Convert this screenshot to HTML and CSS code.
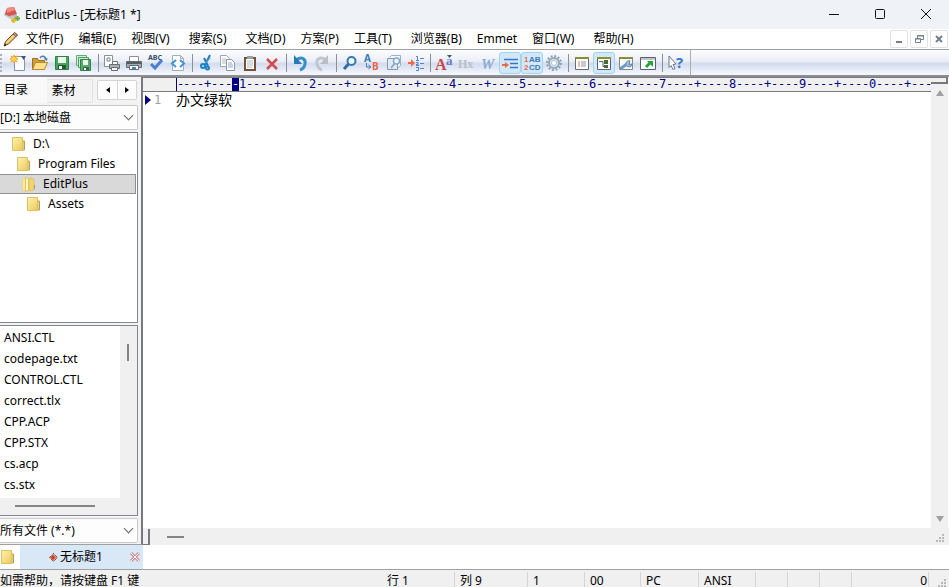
FILE: index.html
```html
<!DOCTYPE html>
<html lang="zh-CN">
<head>
    <meta charset="UTF-8">
    <meta name="viewport" content="width=device-width, initial-scale=1.0">
    <title>EditPlus - [无标题1 *]</title>
    <link rel="stylesheet" href="styles.css">
</head>
<body>
    <svg class="defs" aria-hidden="true">
        <defs>
            <linearGradient id="gold" x1="0" y1="0" x2="1" y2="1">
                <stop offset="0" stop-color="#fff3b0"/><stop offset="1" stop-color="#ebc95c"/>
            </linearGradient>
            <symbol id="folder" viewBox="0 0 16 16">
                <path d="M11 5h2.500v9H11z" fill="#e8cf74" stroke="#c2a13c"/>
                <path d="M1.500 1.500h10v13l-10 0z" fill="url(#gold)" stroke="#dfc164"/>
                <path d="M13.500 9v4" stroke="#8aa2a0"/>
            </symbol>
            <symbol id="folder-open" viewBox="0 0 16 16">
                <path d="M8 2l5 1v11l-5 1z" fill="#f0d372" stroke="#e2c360"/>
                <path d="M1.500 2.500h3v12h-3z" fill="#f8e9a0" stroke="#efd883"/>
                <path d="M4.500 1.500l3 1v12l-3 1z" fill="#fff6c0" stroke="#e3c460"/>
                <path d="M13.500 9v4" stroke="#8aa2a0"/>
            </symbol>
        </defs>
    </svg>

    <!-- Title bar -->
    <header class="titlebar">
        <svg class="app-icon" viewBox="0 0 16 16">
            <path d="M0 8l3-6 10 6-2 6z" fill="#b9b3b3"/>
            <path d="M3 1l7-1 3 7-8 2-4-2z" fill="#d9534f"/>
            <path d="M3 1l7-1 1 3-8 3z" fill="#ee8b80"/>
            <path d="M0 8l6 2 4-1v4l-4-1z" fill="#cfcaca"/>
            <path d="M13.500 9v5M11 11.500h5" stroke="#6cab3c" stroke-width="2"/>
            <path d="M9.500 11v5M7 13.500h5" stroke="#e5b62c" stroke-width="2"/>
        </svg>
        <h1>EditPlus - [无标题1 *]</h1>
        <div class="window-buttons">
            <button aria-label="最小化"><svg viewBox="0 0 12 12"><path d="M1 6.500h10"/></svg></button>
            <button aria-label="最大化"><svg viewBox="0 0 12 12"><rect x="1.500" y="1.500" width="9" height="9" rx="1"/></svg></button>
            <button aria-label="关闭"><svg viewBox="0 0 12 12"><path d="M1 1l10 10M11 1L1 11"/></svg></button>
        </div>
    </header>

    <!-- Menu bar -->
    <nav class="menubar">
        <svg class="doc-icon" viewBox="0 0 16 16">
            <path d="M1 15l1.500-4.500L11.500 1.500l3 2.500L5.500 13z" fill="#f0bc62" stroke="#6d4c2c"/>
            <path d="M4 11.500l8-8" stroke="#fff0bd"/>
            <path d="M11.500 1.500l3 2.500-1.500 1.500-3-2.500z" fill="#d98e88" stroke="#7b5955"/>
            <path d="M1 15l1-2.500 1.500 1.500z" fill="#222"/>
        </svg>
        <button>文件(F)</button>
        <button>编辑(E)</button>
        <button class="wide">视图(V)</button>
        <button class="wide">搜索(S)</button>
        <button>文档(D)</button>
        <button>方案(P)</button>
        <button class="wide">工具(T)</button>
        <button>浏览器(B)</button>
        <button>Emmet</button>
        <button class="wide">窗口(W)</button>
        <button>帮助(H)</button>
        <div class="mdi-buttons">
            <button aria-label="最小化文档"><svg viewBox="0 0 10 10"><path d="M2 8h6" stroke-width="2"/></svg></button>
            <button aria-label="还原文档"><svg viewBox="0 0 10 10"><path d="M3.500 4V1.500h6v4H7M3 2h7M1.500 4.500h5v4h-5zM1 5h6"/></svg></button>
            <button aria-label="关闭文档"><svg viewBox="0 0 10 10"><path d="M2 2l6 6M8 2L2 8" stroke-width="2"/></svg></button>
        </div>
    </nav>

    <!-- Toolbar -->
    <div class="toolbar">
        <span class="handle"></span>
        <button aria-label="新建"><svg viewBox="0 0 16 16"><path d="M4.500 1.500h10v14h-10z" fill="#fafbfd" stroke="#8794a4"/><path d="M11 1h5l-2.500 4z" fill="#41586d"/><path d="M4 0v8M0 4h8M1 1l6 6M7 1L1 7" stroke="#f4a21f" stroke-width="1.500"/><circle cx="4" cy="4" r="2" fill="#ffd457"/></svg></button>
        <button aria-label="打开"><svg viewBox="0 0 16 16"><path d="M.5 14.500v-11h5l1 2h6v9z" fill="#d49a35" stroke="#9a7028"/><path d="M.5 14.500l3-7h12l-3 7z" fill="#ffe08a" stroke="#b88a32"/><path d="M8 3c2-3 5-2 6 1" fill="none" stroke="#4e7fae" stroke-width="1.500"/><path d="M11.500 3.500H16L14.500 6z" fill="#4e7fae"/></svg></button>
        <button aria-label="保存"><svg viewBox="0 0 16 16"><path d="M1.500 1.500h13v13h-13z" fill="#43a65b" stroke="#2d8142"/><path d="M4 2h8v6H4z" fill="#edf6ee"/><path d="M4 10h8v4H4z" fill="#2b5740"/><path d="M5 11h3v3H5z" fill="#fff"/></svg></button>
        <button aria-label="全部保存"><svg viewBox="0 0 16 16"><path d="M.5 .5h10v10H.5z" fill="#d5ebd9" stroke="#62ad70"/><path d="M2.500 2.500h10v10h-10z" fill="#d5ebd9" stroke="#4b9f5c"/><path d="M4.500 4.500h10v11h-10z" fill="#56ad6b" stroke="#2d8142"/><path d="M7 5h5v5H7z" fill="#edf6ee"/><path d="M7 12h6v3H7z" fill="#35684a"/><path d="M8 13h2v2H8z" fill="#fff"/></svg></button>
        <span class="sep"></span>
        <button aria-label="打印预览"><svg viewBox="0 0 16 16"><path d="M.5 .5h8v11h-8z" fill="#fff" stroke="#8a9097"/><path d="M3 3h3v3H3z" fill="none" stroke="#7d8690"/><path d="M8.500 6.500h5v3h-5z" fill="#fff" stroke="#6e757c"/><path d="M5.500 9.500h10v4h-10z" fill="#aab0b6" stroke="#666d75"/><path d="M7.500 12.500h6v3h-6z" fill="#fff" stroke="#666d75"/></svg></button>
        <button aria-label="打印"><svg viewBox="0 0 16 16"><path d="M3.500 1.500h9v5h-9z" fill="#fff" stroke="#8a9097"/><path d="M.5 6.500h15v6H.5z" fill="#a3abb3" stroke="#626a72"/><path d="M1 8h14" stroke="#555c64" stroke-width="2"/><path d="M3.500 10.500h9v4h-9z" fill="#fff" stroke="#666d75"/><path d="M6 13h4" stroke="#4388ca" stroke-width="2"/></svg></button>
        <button aria-label="拼写检查"><svg viewBox="0 0 16 16"><text x="0" y="5" class="abc">ABC</text><path d="M3 9l4 4 7-8" fill="none" stroke="#4a80cc" stroke-width="3"/></svg></button>
        <button aria-label="查看源代码"><svg viewBox="0 0 16 16"><path d="M2.500 .5h8l3 3v12h-11z" fill="#fff" stroke="#a5adb5"/><path d="M10.500 .5v3h3" fill="none" stroke="#a5adb5"/><path d="M6 5L2 8.500 6 12M10 5l4 3.500-4 3.500" fill="none" stroke="#3f94d5" stroke-width="2"/></svg></button>
        <span class="sep"></span>
        <button aria-label="剪切"><svg viewBox="0 0 16 16"><path d="M12 0L7 10M6 3l4 8" stroke="#2579b8" stroke-width="2"/><path d="M13 3L6 9" stroke="#78b7df"/><circle cx="5" cy="11" r="2" fill="none" stroke="#1784c8" stroke-width="2"/><circle cx="9.500" cy="13" r="1.500" fill="none" stroke="#1784c8" stroke-width="2"/></svg></button>
        <button aria-label="复制"><svg viewBox="0 0 16 16"><path d="M.5 .5h6l3 3v8h-9z" fill="#fff" stroke="#9ba6b2"/><path d="M2 4h4M2 6h5M2 8h5" stroke="#b0bac7"/><path d="M6.500 4.500h5l3 3v8h-8z" fill="#fff" stroke="#8997aa"/><path d="M8 8h4M8 10h5M8 12h5" stroke="#91a8cc"/></svg></button>
        <button aria-label="粘贴"><svg viewBox="0 0 16 16"><path d="M2 2h12v14H2z" fill="#765136"/><path d="M4 4h8v10H4z" fill="#fff"/><path d="M5 1h6v3H5z" fill="#999fa5"/><path d="M5 6h6M5 8h6M5 10h6M5 12h5" stroke="#b4bac0"/></svg></button>
        <button aria-label="删除"><svg viewBox="0 0 16 16"><path d="M3 4l10 10M13 4L3 14" stroke="#d14b50" stroke-width="2.500"/></svg></button>
        <span class="sep"></span>
        <button aria-label="撤销"><svg viewBox="0 0 16 16"><path d="M4 5c6-4 10-1 9 4-.5 3-2 5-5 6" fill="none" stroke="#378fc7" stroke-width="3"/><path d="M2 0v9h8z" fill="#2879b6"/></svg></button>
        <button aria-label="重做"><svg viewBox="0 0 16 16"><path d="M12 5C6 1 2 4 3 9c.5 3 2 5 5 6" fill="none" stroke="#c0c7cc" stroke-width="3"/><path d="M14 0v9H6z" fill="#b8c0c6"/></svg></button>
        <span class="sep"></span>
        <button aria-label="查找"><svg viewBox="0 0 16 16"><circle cx="9.500" cy="6" r="4" fill="#eef8ff" stroke="#3479b4" stroke-width="2"/><path d="M6.500 9L2 14" stroke="#316ba0" stroke-width="3"/></svg></button>
        <button aria-label="替换"><svg viewBox="0 0 16 16"><text x="0" y="7" class="letter blue">A</text><text x="8" y="15" class="letter red">B</text><path d="M2.500 8v4H6M4.500 10L7 12l-2.500 2" fill="none" stroke="#4778ae"/></svg></button>
        <button aria-label="在文件中查找"><svg viewBox="0 0 16 16"><path d="M3.500 2.500l2-2h9v10l-3 3" fill="#f1f6fb" stroke="#9db0c8"/><path d="M1.500 3.500h10v11h-10z" fill="#dfeaf5" stroke="#8299b5"/><circle cx="10.500" cy="6" r="3" fill="#eef8ff" stroke="#8fa9c6" stroke-width="1.500"/><path d="M9 8l-4 5" stroke="#8fa9c6" stroke-width="2"/></svg></button>
        <button aria-label="转到行"><svg viewBox="0 0 16 16"><path d="M0 8h6" stroke="#f06b45" stroke-width="2"/><path d="M3 4l4 4-4 4z" fill="#f06b45"/><path d="M8 1.500h1.500V5M8 5.500h3M8 7.500h2v2H8M8 10.500h3M8 12.500h2.500v3H8" fill="none" stroke="#4e82c8"/><path d="M12 3.500h4M12 8.500h4M12 13.500h4" stroke="#5688c7"/></svg></button>
        <span class="sep"></span>
        <button aria-label="字体"><svg viewBox="0 0 16 16"><text x="-1" y="15" class="big-a">A</text><text x="10" y="10" class="small-a">a</text><path d="M11 0h5l-2.500 3z" fill="#41586d"/></svg></button>
        <button aria-label="十六进制"><svg viewBox="0 0 16 16"><text x="0" y="13" class="hex">Hx</text></svg></button>
        <button aria-label="自动换行"><svg viewBox="0 0 16 16"><text x="1" y="14" class="wrap">W</text></svg></button>
        <button class="on" aria-label="缩进" aria-pressed="true"><svg viewBox="0 0 16 16"><path d="M2 4.500h14M8 8.500h8M8 12.500h8" stroke="#3975c5" stroke-width="1.500"/><path d="M0 10h5" stroke="#f06b45" stroke-width="2"/><path d="M3 7l4 3-4 3z" fill="#f06b45"/></svg></button>
        <button class="on" aria-label="行号" aria-pressed="true"><svg viewBox="0 0 16 16"><text x="0" y="7" class="tiny red">1</text><text x="5" y="7" class="tiny blue">AB</text><text x="0" y="15" class="tiny red">2</text><text x="5" y="15" class="tiny blue">CD</text></svg></button>
        <button aria-label="首选项"><svg viewBox="0 0 16 16"><circle cx="8" cy="8" r="7" fill="none" stroke="#8ba3b5" stroke-width="2" stroke-dasharray="2 1.665"/><circle cx="8" cy="8" r="5" fill="#dce7ef" stroke="#91a8b9" stroke-width="2"/><circle cx="8" cy="8" r="2.500" fill="#fff" stroke="#b3c3cf"/></svg></button>
        <span class="sep"></span>
        <button aria-label="输出窗口"><svg viewBox="0 0 16 16"><path d="M1.500 2.500h13v12h-13z" fill="#fff" stroke="#666e73"/><path d="M1 3h14" stroke="#899030" stroke-width="2"/><path d="M4 7h2M4 9h2M4 11h2" stroke="#e47b57"/><path d="M7 7h5M7 9h5M7 11h5" stroke="#8797a8"/></svg></button>
        <button class="on" aria-label="目录窗口" aria-pressed="true"><svg viewBox="0 0 16 16"><path d="M1.500 2.500h13v12h-13z" fill="#fff" stroke="#596267"/><path d="M1 3h14" stroke="#899030" stroke-width="2"/><path d="M3 6.500h4v5h2" stroke="#466484" fill="none"/><path d="M8 5h4v4H8zM8 10h4v3H8z" fill="#486c39"/></svg></button>
        <button aria-label="用户工具"><svg viewBox="0 0 16 16"><path d="M1.500 2.500h13v12h-13z" fill="#f6f8fa" stroke="#838b91"/><path d="M1 3h14" stroke="#899030" stroke-width="2"/><path d="M2 14l7-5" stroke="#7398c4" stroke-width="3"/><path d="M12 6a3 3 0 1 0 2 3l-3 .5z" fill="#a3bfdf" stroke="#6285ac"/></svg></button>
        <button aria-label="外部浏览器"><svg viewBox="0 0 16 16"><path d="M.5 2.500h15v12H.5z" fill="#fff" stroke="#596267"/><path d="M1 4h14" stroke="#818b93"/><path d="M6 12l5-5" stroke="#28a33a" stroke-width="3"/><path d="M7 6h6v6z" fill="#28a33a"/></svg></button>
        <span class="sep"></span>
        <button aria-label="帮助"><svg viewBox="0 0 16 16"><path d="M1 1l7 8-3 .5 2 4-2 1-2-4-2 2z" fill="#fff" stroke="#69788a"/><text x="8" y="13" class="question">?</text></svg></button>
        <span class="sep last"></span>
    </div>

    <main class="workspace">
        <!-- Directory panel -->
        <aside class="sidebar">
            <div class="panel-tabs">
                <button class="panel-tab active">目录</button>
                <button class="panel-tab">素材</button>
                <div class="spinner">
                    <button aria-label="上一个"><span class="arrow left"></span></button>
                    <button aria-label="下一个"><span class="arrow right"></span></button>
                </div>
            </div>
            <div class="combo">
                <select aria-label="驱动器"><option>[D:] 本地磁盘</option></select>
            </div>
            <ul class="tree">
                <li><button class="level-1"><svg><use href="#folder"/></svg>D:\</button></li>
                <li><button class="level-2"><svg><use href="#folder"/></svg>Program Files</button></li>
                <li><button class="level-3 selected"><svg><use href="#folder-open"/></svg>EditPlus</button></li>
                <li><button class="level-4"><svg><use href="#folder"/></svg>Assets</button></li>
            </ul>
            <div class="files">
                <ul>
                    <li><button>ANSI.CTL</button></li>
                    <li><button>codepage.txt</button></li>
                    <li><button>CONTROL.CTL</button></li>
                    <li><button>correct.tlx</button></li>
                    <li><button>CPP.ACP</button></li>
                    <li><button>CPP.STX</button></li>
                    <li><button>cs.acp</button></li>
                    <li><button>cs.stx</button></li>
                </ul>
                <div class="files-vscroll"><span></span></div>
                <div class="files-hscroll"><span></span></div>
            </div>
            <div class="combo">
                <select aria-label="文件类型"><option>所有文件 (*.*)</option></select>
            </div>
        </aside>

        <!-- Editor -->
        <section class="editor">
            <div class="ruler" id="ruler"></div>
            <div class="page">
                <div class="gutter"><span class="arrow current"></span>1</div>
                <textarea aria-label="无标题1" spellcheck="false">办文绿软</textarea>
            </div>
            <div class="vscroll">
                <span class="splitter"></span>
                <span class="arrow up"></span>
                <span class="arrow down"></span>
            </div>
            <div class="hscroll">
                <span class="splitter"></span>
                <span class="thumb"></span>
                <svg class="grip" viewBox="0 0 9 9"><path d="M6 0h2v2H6zM3 3h2v2H3zM6 3h2v2H6zM0 6h2v2H0zM3 6h2v2H3zM6 6h2v2H6z"/></svg>
            </div>
        </section>
    </main>

    <!-- Open documents -->
    <div class="doc-tabs">
        <svg class="folder"><use href="#folder"/></svg>
        <div class="doc-tab">
            <button class="doc-name"><svg viewBox="0 0 9 9"><path d="M4.500 .5l4 4-4 4-4-4z" fill="#e5a08a" stroke="#4c2a22" stroke-dasharray="1 1"/><path d="M4 2l2.500 2.500L4 7 1.500 4.500z" fill="#d33a22"/></svg>无标题1</button>
            <button class="doc-close" aria-label="关闭无标题1"><svg viewBox="0 0 10 10"><path d="M1 1l8 8M9 1L1 9" stroke="#d08a90" stroke-width="3"/><path d="M1 1l8 8M9 1L1 9" stroke="#fff"/></svg></button>
        </div>
    </div>

    <!-- Status bar -->
    <footer class="statusbar">
        <span>如需帮助，请按键盘 F1 键</span>
        <span>行 1</span>
        <span>列 9</span>
        <span>1</span>
        <span>00</span>
        <span>PC</span>
        <span>ANSI</span>
        <span></span>
        <span></span>
        <span></span>
        <span class="count">0</span>
        <svg class="grip" viewBox="0 0 9 9"><path d="M6 0h2v2H6zM3 3h2v2H3zM6 3h2v2H6zM0 6h2v2H0zM3 6h2v2H3zM6 6h2v2H6z"/></svg>
    </footer>

    <script>
        const ruler = document.getElementById("ruler");
        const cursorColumn = 9;
        const columnWidth = 7;
        const gutterWidth = 33;

        // Build the column ruler, one cell per character column
        function drawRuler() {
            const columns = Math.ceil((ruler.clientWidth - gutterWidth) / columnWidth);
            ruler.innerHTML = "";

            for (let col = 1; col <= columns; col++) {
                const cell = document.createElement("span");
                if (col % 10 === 0) {
                    cell.textContent = (col / 10) % 10;
                } else {
                    cell.textContent = col % 5 === 0 ? "+" : "-";
                }
                if (col === cursorColumn) {
                    cell.className = "cursor";
                }
                ruler.appendChild(cell);
            }
        }

        window.addEventListener("resize", drawRuler);
        drawRuler();
    </script>
</body>
</html>
```
FILE: styles.css
```css
* {
    box-sizing: border-box;
}
body {
    margin: 0;
    height: 100vh;
    display: flex;
    flex-direction: column;
    overflow: hidden;
    background-color: #fff;
    color: #000;
    font-family: "Noto Sans", "Noto Sans CJK SC", sans-serif;
    font-size: 12px;
    line-height: 16px;
}
button, select, textarea {
    margin: 0;
    padding: 0;
    border: none;
    border-radius: 0;
    background: none;
    color: inherit;
    font: inherit;
}
ul {
    margin: 0;
    padding: 0;
    list-style: none;
}
svg {
    display: block;
    flex: none;
    overflow: visible;
}
.defs {
    width: 0;
    height: 0;
    position: absolute;
}

/* Title bar */
.titlebar {
    display: flex;
    align-items: center;
    flex: none;
    height: 29px;
    padding-left: 4px;
    background-color: #eff2f7;
}
.app-icon {
    width: 16px;
    height: 16px;
}
.titlebar h1 {
    margin: 0 auto 0 5px;
    font-size: 12px;
    font-weight: normal;
}
.window-buttons {
    display: flex;
    height: 27px;
    align-self: flex-start;
}
.window-buttons button {
    display: flex;
    align-items: center;
    justify-content: center;
    width: 46px;
}
.window-buttons svg {
    width: 12px;
    height: 12px;
    fill: none;
    stroke: #111;
}

/* Menu bar */
.menubar {
    display: flex;
    align-items: center;
    gap: 15px;
    flex: none;
    height: 20px;
    padding: 0 1px 0 3px;
}
.doc-icon {
    width: 16px;
    height: 16px;
    margin-right: -8px;
}
.menubar .wide {
    margin-right: 4px;
}
.mdi-buttons {
    display: flex;
    gap: 2px;
    margin-left: auto;
}
.mdi-buttons button {
    display: flex;
    align-items: center;
    justify-content: center;
    width: 18px;
    height: 18px;
    border: 1px solid #e2e2e2;
    border-radius: 2px;
}
.mdi-buttons svg {
    width: 10px;
    height: 10px;
    fill: none;
    stroke: #75808b;
}

/* Toolbar */
.toolbar {
    display: flex;
    align-items: center;
    flex: none;
    height: 28px;
    border-top: 1px solid #a0a0a0;
    border-bottom: 2px solid #8d8e93;
    background: linear-gradient(#fdfdfe, #eaeef7 45%, #d3dbed 55%, #f3f6fc 95%);
}
.toolbar button {
    display: flex;
    align-items: center;
    justify-content: center;
    width: 22px;
    height: 22px;
    border: 1px solid transparent;
    border-radius: 3px;
}
.toolbar button.on {
    border-color: #a5d2f1;
    background-color: #d0e8fa;
}
.toolbar svg {
    width: 16px;
    height: 16px;
}
.handle {
    width: 2px;
    height: 18px;
    margin-right: 5px;
    border-right: 2px dotted #a9b2c6;
}
.sep {
    width: 6px;
    height: 18px;
    background: linear-gradient(#8c9096, #8c9096) center / 1px 100% no-repeat;
}
.sep.last {
    width: 4px;
    height: 25px;
    background: linear-gradient(#a9acb2, #a9acb2) right / 1px 100% no-repeat;
}
.abc {
    font-size: 7px;
    font-weight: bold;
    fill: #33506c;
}
.letter {
    font-size: 10px;
    font-weight: bold;
}
.tiny {
    font: bold 8px "Liberation Sans", sans-serif;
}
.blue {
    fill: #3f78b4;
}
.red {
    fill: #e8684a;
}
.big-a {
    font: bold 16px "Liberation Serif", serif;
    fill: #c7474d;
}
.small-a {
    font: bold 13px "Liberation Serif", serif;
    fill: #6a7cc4;
}
.hex {
    font: bold 12px "Liberation Serif", serif;
    fill: #b7bfc9;
}
.wrap {
    font: italic bold 15px "Liberation Serif", serif;
    fill: #8cacd0;
}
.question {
    font-size: 15px;
    font-weight: bold;
    fill: #3c79c8;
}

/* Workspace */
.workspace {
    display: flex;
    flex: 1;
    min-height: 0;
}
.sidebar {
    display: flex;
    flex-direction: column;
    gap: 2px;
    width: 143px;
    flex: none;
    padding: 0 3px 1px 0;
    border-right: 2px solid #77797d;
    border-bottom: 1px solid #a0a0a0;
    background-color: #f3f3f3;
}
.panel-tabs {
    display: flex;
    align-items: flex-end;
    height: 26px;
}
.panel-tab {
    width: 46px;
    height: 24px;
    padding-right: 12px;
    border: 1px solid #e5e5e5;
    border-left: none;
}
.panel-tab.active {
    width: 47px;
    height: 26px;
    padding-right: 14px;
    border-color: #f9f9f9;
    background-color: #f9f9f9;
}
.spinner {
    display: flex;
    align-self: flex-start;
    margin: 3px 1px 0 auto;
    border: 1px solid #d5d5d5;
    border-radius: 2px;
    background-color: #fdfdfd;
}
.spinner button {
    display: flex;
    align-items: center;
    justify-content: center;
    width: 19px;
    height: 18px;
}
.spinner button + button {
    border-left: 1px solid #d5d5d5;
}
.arrow {
    border: 4px solid transparent;
}
.arrow.left {
    border-left-width: 0;
    border-right-color: #000;
    border-top-width: 3px;
    border-bottom-width: 3px;
}
.arrow.right {
    border-right-width: 0;
    border-left-color: #000;
    border-top-width: 3px;
    border-bottom-width: 3px;
}
.combo {
    position: relative;
    flex: none;
}
.combo select {
    display: block;
    width: 100%;
    height: 25px;
    border: 1px solid #c9c9c9;
    border-left: none;
    border-radius: 0 2px 2px 0;
    background-color: #fdfdfd;
    appearance: none;
}
.combo::after {
    content: "";
    position: absolute;
    top: 7px;
    right: 6px;
    width: 6px;
    height: 6px;
    border: solid #666;
    border-width: 0 1px 1px 0;
    transform: rotate(45deg);
}
.tree {
    flex: 1;
    min-height: 0;
    padding: 1px 1px 0 0;
    border: 1px solid #828790;
    border-left: none;
    background-color: #fff;
}
.tree button {
    display: flex;
    align-items: center;
    gap: 6px;
    width: 100%;
    height: 20px;
    border: 1px solid transparent;
    border-left: none;
}
.tree svg, .doc-tabs .folder {
    width: 16px;
    height: 16px;
}
.tree .level-1 {
    padding-left: 11px;
}
.tree .level-2 {
    padding-left: 16px;
}
.tree .level-3 {
    padding-left: 21px;
}
.tree .level-4 {
    padding-left: 26px;
}
.tree .selected {
    border-color: #8f8f8f;
    background-color: #d9d9d9;
}
.files {
    display: grid;
    grid-template: 1fr 17px / 1fr 17px;
    height: 191px;
    flex: none;
    border: 1px solid #828790;
    border-left: none;
    background-color: #f0f0f0;
}
.files ul {
    padding-top: 1px;
    background-color: #fff;
}
.files li button {
    display: block;
    width: 100%;
    height: 21px;
    padding-left: 4px;
    text-align: left;
}
.files-vscroll span {
    display: block;
    width: 2px;
    height: 17px;
    margin: 18px 0 0 7px;
    background-color: #858585;
}
.files-hscroll span {
    display: block;
    width: 80px;
    height: 2px;
    margin: 7px 0 0 15px;
    background-color: #858585;
}

/* Editor */
.editor {
    display: grid;
    grid-template: 15px 1fr 17px / minmax(0, 1fr) 18px;
    flex: 1;
    min-width: 0;
}
.ruler {
    display: flex;
    overflow: hidden;
    padding-left: 33px;
    border-top: 1px solid #77797d;
    border-bottom: 1px solid #77797d;
    background-color: #f0f0f0;
    color: #000080;
    font-family: "DejaVu Sans Mono", monospace;
    line-height: 13px;
}
.ruler span {
    width: 7px;
    flex: none;
    text-align: center;
}
.ruler span:first-child {
    border-left: 1px solid #000080;
}
.ruler .cursor {
    background-color: #000080;
    color: #fff;
}
.page {
    grid-row: 2;
    display: flex;
    background-color: #fff;
}
.gutter {
    display: flex;
    align-items: center;
    gap: 3px;
    width: 33px;
    height: 16px;
    padding-left: 2px;
    color: #a0a0a0;
    font-family: "DejaVu Sans Mono", monospace;
}
.arrow.current {
    border-width: 5px 0 5px 6px;
    border-left-color: #000080;
}
.page textarea {
    flex: 1;
    resize: none;
    outline: none;
    font-family: "DejaVu Sans Mono", "Noto Sans CJK SC", monospace;
    font-size: 14px;
    line-height: 16px;
}
.vscroll {
    grid-column: 2;
    grid-row: 1 / 3;
    display: flex;
    flex-direction: column;
    align-items: center;
    padding-bottom: 6px;
    border-right: 1px solid #fff;
    background-color: #f0f0f0;
}
.vscroll .splitter {
    width: 100%;
    height: 7px;
    margin-bottom: 6px;
    border: solid #77797d;
    border-width: 1px 2px 2px 0;
}
.arrow.up {
    border-width: 0 4px 6px;
    border-bottom-color: #a0a0a0;
}
.arrow.down {
    margin-top: auto;
    border-width: 6px 4px 0;
    border-top-color: #a0a0a0;
}
.hscroll {
    grid-column: 1 / 3;
    display: flex;
    align-items: center;
    background-color: #f0f0f0;
}
.hscroll .splitter {
    width: 7px;
    height: 16px;
    border: solid #77797d;
    border-width: 0 2px 1px 0;
}
.thumb {
    width: 17px;
    height: 2px;
    margin-left: 17px;
    background-color: #858585;
}
.grip {
    width: 9px;
    height: 9px;
    fill: #b8b8b8;
}
.hscroll .grip {
    margin: 4px 4px 0 auto;
}

/* Open documents */
.doc-tabs {
    display: flex;
    align-items: center;
    gap: 4px;
    flex: none;
    height: 24px;
}
.doc-tab {
    display: flex;
    align-items: center;
    width: 123px;
    height: 24px;
    padding: 0 3px 0 29px;
    background-color: #d9e8f7;
}
.doc-name {
    display: flex;
    align-items: center;
    gap: 2px;
    margin-right: auto;
}
.doc-name svg {
    width: 9px;
    height: 9px;
}
.doc-close svg {
    width: 10px;
    height: 10px;
}

/* Status bar */
.statusbar {
    display: grid;
    grid-template-columns: 382px 73px 73px 57px 56px 58px 57px 32px 32px 32px 1fr 20px;
    flex: none;
    height: 18px;
    padding-top: 2px;
    border-top: 1px solid #a0a0a0;
    background-color: #f0f0f0;
    line-height: 18px;
    white-space: nowrap;
}
.statusbar span {
    padding-left: 5px;
    border-right: 1px solid #d5d5d5;
}
.statusbar span:first-child {
    padding-left: 0;
    border-right: none;
}
.statusbar .count {
    padding-right: 1px;
    text-align: right;
}
.statusbar .grip {
    margin: 7px 0 0 9px;
}
```
